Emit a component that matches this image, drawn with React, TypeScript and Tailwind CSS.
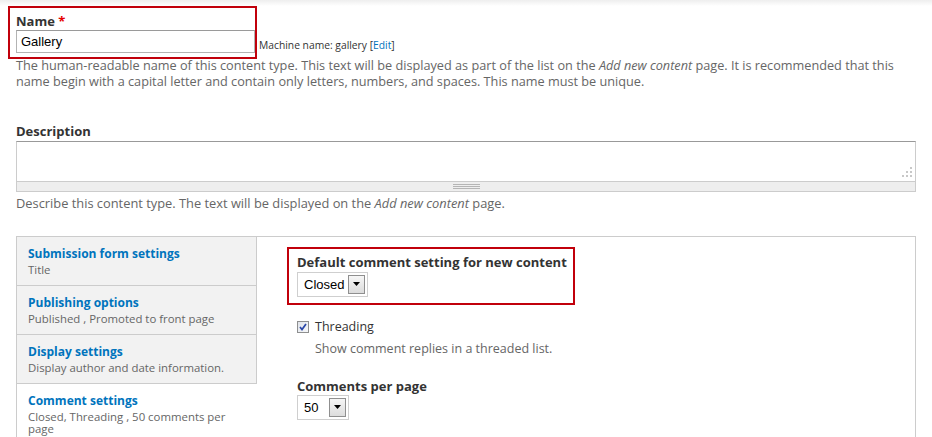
import React from "react";

function SelectBox({ value, width }: { value: string; width: string }) {
  return (
    <div className={`flex items-center h-[25px] border border-[#cfcfcf] bg-white pl-[6px] pr-[2px] ${width}`}>
      <span className="flex-1 font-['Liberation_Sans'] text-[13px] text-black leading-none">{value}</span>
      <span className="flex items-center justify-center w-[17px] h-[19px] border border-[#8f8f8f] bg-[linear-gradient(#f6f6f6,#dcdcdc)]">
        <svg width="7" height="4" viewBox="0 0 7 4">
          <path d="M0 0H7L3.5 4Z" fill="#000" />
        </svg>
      </span>
    </div>
  );
}

function Tab({ title, summary, active }: { title: string; summary: string; active?: boolean }) {
  return (
    <div
      className={
        active
          ? "bg-white px-[11px] pt-[9px] pb-[8px]"
          : "bg-[#f2f2f2] border-b border-r border-[#cccccc] px-[11px] pt-[9px] pb-[9px]"
      }
    >
      <div className="text-[12px] font-bold text-[#0074bd] leading-[16px]">{title}</div>
      <div className="text-[11.4px] text-[#666666] leading-[12px] mt-[2px]">{summary}</div>
    </div>
  );
}

export default function App() {
  return (
    <div className="w-[932px] h-[437px] overflow-hidden bg-white bg-[linear-gradient(#eeeeee,#ffffff_6px)] pl-4 pr-[17px] pt-[12px] font-['Open_Sans',sans-serif] text-[#333333]">
      {/* Name */}
      <div className="relative">
        <div className="absolute left-[-8px] top-[-6px] w-[249px] h-[53px] border-2 border-[#c1000b] pointer-events-none" />
        <div className="text-[13px] font-bold leading-[18px] text-[#333333]">
          Name <span className="text-[#e60000]">*</span>
        </div>
        <div className="flex items-end">
          <div className="w-[239px] h-[23px] border border-[#b3b3b3] border-t-[#9a9a9a] bg-white pl-[4px] flex items-center font-['Liberation_Sans'] text-[13px] text-black">
            Gallery
          </div>
          <span className="ml-[4px] mb-[3px] text-[10.3px] leading-none text-[#333333]">
            Machine name: gallery [<span className="text-[#0074bd]">Edit</span>]
          </span>
        </div>
        <p className="text-[12.7px] leading-[15.5px] text-[#666666] mt-[5px] w-[890px]">
          The human-readable name of this content type. This text will be displayed as part of the list on the{" "}
          <em>Add new content</em> page. It is recommended that this name begin with a capital letter and contain only
          letters, numbers, and spaces. This name must be unique.
        </p>
      </div>

      {/* Description */}
      <div className="mt-[33px]">
        <div className="text-[13px] font-bold leading-[18px]">Description</div>
        <div className="mt-[1px] w-[900px]">
          <div className="relative h-[40px] border border-[#cccccc] border-t-[#999999] border-b-0 bg-white">
            <svg className="absolute right-[3px] bottom-[4px]" width="10" height="10" viewBox="0 0 10 10">
              <rect x="8" y="0" width="2" height="2" fill="#c8c8c8" />
              <rect x="4" y="4" width="2" height="2" fill="#c8c8c8" />
              <rect x="8" y="4" width="2" height="2" fill="#c8c8c8" />
              <rect x="0" y="8" width="2" height="2" fill="#c8c8c8" />
              <rect x="4" y="8" width="2" height="2" fill="#c8c8c8" />
              <rect x="8" y="8" width="2" height="2" fill="#c8c8c8" />
            </svg>
          </div>
          <div className="h-[11px] border border-[#cccccc] bg-[#eeeeee] flex flex-col items-center justify-center gap-[1px]">
            <div className="w-[27px] h-px bg-[#b5b5b5]" />
            <div className="w-[27px] h-px bg-[#b5b5b5]" />
            <div className="w-[27px] h-px bg-[#b5b5b5]" />
          </div>
        </div>
        <p className="text-[12.85px] leading-[15.5px] text-[#666666] mt-[4px]">
          Describe this content type. The text will be displayed on the <em>Add new content</em> page.
        </p>
      </div>

      {/* Vertical tabs */}
      <div className="mt-[24px] w-[900px] h-[220px] border border-[#cccccc] border-b-0 flex">
        <div className="w-[240px] flex flex-col">
          <Tab title="Submission form settings" summary="Title" />
          <Tab title="Publishing options" summary="Published , Promoted to front page" />
          <Tab title="Display settings" summary="Display author and date information." />
          <Tab active title="Comment settings" summary="Closed, Threading , 50 comments per page" />
        </div>
        <div className="flex-1 pl-[40px] pt-[16px]">
          <div className="relative">
            <div className="absolute left-[-10px] top-[-6px] w-[288px] h-[58px] border-2 border-[#c1000b] pointer-events-none" />
            <div className="text-[13px] font-bold leading-[18px]">Default comment setting for new content</div>
            <div className="mt-[1px]">
              <SelectBox value="Closed" width="w-[71px]" />
            </div>
          </div>
          <div className="mt-[22px] flex items-center gap-[6px]">
            <svg width="12" height="12" viewBox="0 0 12 12">
              <defs>
                <linearGradient id="cbg" x1="0" y1="0" x2="1" y2="1">
                  <stop offset="0" stopColor="#dfe3ea" />
                  <stop offset="1" stopColor="#f7f8fa" />
                </linearGradient>
              </defs>
              <rect x="0.5" y="0.5" width="11" height="11" fill="url(#cbg)" stroke="#8e8f8f" />
              <path d="M3 6L5 8.6L9 3" fill="none" stroke="#2a47a8" strokeWidth="1.7" />
            </svg>
            <span className="text-[12.5px] leading-[16px] text-[#333333]">Threading</span>
          </div>
          <p className="ml-[18px] mt-[6px] text-[12.5px] leading-[15px] text-[#666666]">
            Show comment replies in a threaded list.
          </p>
          <div className="mt-[21px] text-[13px] font-bold leading-[18px]">Comments per page</div>
          <div>
            <SelectBox value="50" width="w-[52px]" />
          </div>
        </div>
      </div>
    </div>
  );
}
